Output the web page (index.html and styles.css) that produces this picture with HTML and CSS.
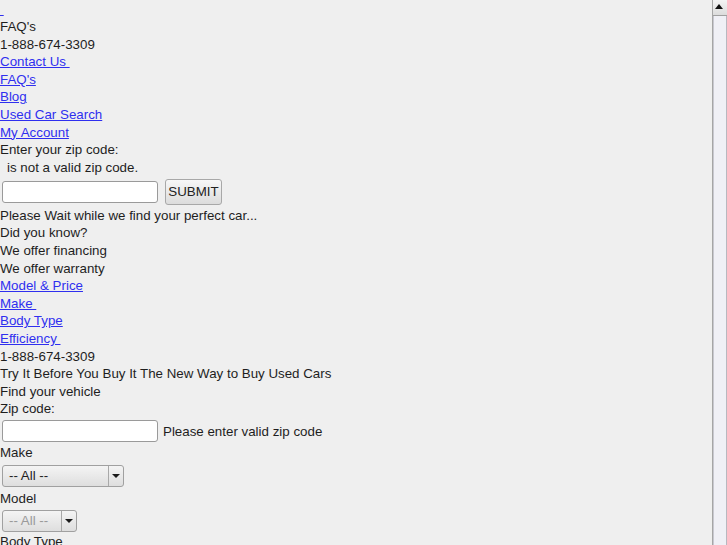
FILE: index.html
```html
<!DOCTYPE html>
<html>
<head>
<meta charset="utf-8">
<title>Used Cars</title>
<link rel="stylesheet" href="styles.css">
</head>
<body>
<div class="page">
  <div class="line"><a href="#" class="lnk">&nbsp;</a></div>
  <div class="line">FAQ's</div>
  <div class="line">1-888-674-3309</div>
  <div class="line"><a href="#" class="lnk">Contact Us </a></div>
  <div class="line"><a href="#" class="lnk">FAQ's</a></div>
  <div class="line"><a href="#" class="lnk">Blog</a></div>
  <div class="line"><a href="#" class="lnk">Used Car Search</a></div>
  <div class="line"><a href="#" class="lnk">My Account</a></div>
  <div class="line">Enter your zip code:</div>
  <div class="line indent">is not a valid zip code.</div>
  <div class="row row-submit">
    <span class="field"></span>
    <span class="btn">SUBMIT</span>
  </div>
  <div class="line">Please Wait while we find your perfect car...</div>
  <div class="line">Did you know?</div>
  <div class="line">We offer financing</div>
  <div class="line">We offer warranty</div>
  <div class="line"><a href="#" class="lnk">Model &amp; Price</a></div>
  <div class="line"><a href="#" class="lnk">Make </a></div>
  <div class="line"><a href="#" class="lnk">Body Type</a></div>
  <div class="line"><a href="#" class="lnk">Efficiency </a></div>
  <div class="line">1-888-674-3309</div>
  <div class="line">Try It Before You Buy It The New Way to Buy Used Cars</div>
  <div class="line">Find your vehicle</div>
  <div class="line">Zip code:</div>
  <div class="row row-zip">
    <span class="field"></span>
    <span class="hint">Please enter valid zip code</span>
  </div>
  <div class="line">Make</div>
  <div class="row row-select">
    <span class="select select-make"><span class="sel-text">-- All --</span><span class="sel-arrow"></span></span>
  </div>
  <div class="line">Model</div>
  <div class="row row-select2">
    <span class="select select-model disabled"><span class="sel-text">-- All --</span><span class="sel-arrow"></span></span>
  </div>
  <div class="line">Body Type</div>
  <div class="line">&nbsp;</div>
</div>
<div class="scrollbar">
  <div class="sb-up"><span class="sb-tri"></span></div>
  <div class="sb-track"></div>
</div>
</body>
</html>
```
FILE: styles.css
```css
* {
  box-sizing: border-box;
}
html {
  overflow: hidden;
  background: #efefef;
}
body {
  margin: 0;
  font-family: "Liberation Sans", Arial, sans-serif;
  font-size: 13.33px;
  line-height: 17.6px;
  color: #1e1e1e;
  background: #efefef;
}
.page {
  display: flex;
  flex-direction: column;
  align-items: flex-start;
  padding-top: 0.5px;
}
.line {
  height: 17.6px;
  white-space: pre;
}
.indent {
  padding-left: 7px;
}
.lnk {
  color: #2f2fef;
  text-decoration: underline;
  white-space: pre;
}
.row {
  display: flex;
  align-items: center;
}
.row-submit {
  height: 30.4px;
}
.row-zip {
  height: 26.4px;
  padding-top: 0.6px;
}
.field {
  display: block;
  width: 156px;
  height: 22px;
  margin-left: 2px;
  border: 1px solid #9a9a9a;
  border-radius: 3px;
  background: #ffffff;
}
.btn {
  display: block;
  margin-left: 7px;
  width: 57px;
  height: 26px;
  line-height: 24px;
  text-align: center;
  border: 1px solid #a8a8a8;
  border-radius: 3px;
  background: linear-gradient(#f7f7f7, #dcdcdc);
  color: #222;
}
.hint {
  margin-left: 5px;
}
.row-select {
  height: 27.6px;
  padding-top: 1px;
}
.row-select2 {
  height: 25.6px;
  padding-top: 2px;
}
.select {
  display: flex;
  margin-left: 2px;
  height: 22px;
  border: 1px solid #a0a0a0;
  border-radius: 3px;
  background: linear-gradient(#f4f4f4, #dedede);
}
.select-make { width: 122px; }
.select-model { width: 75px; }
.sel-text {
  flex: 1;
  padding-left: 6px;
  line-height: 20px;
  color: #1e1e1e;
}
.disabled .sel-text {
  color: #9a9a9a;
}
.sel-arrow {
  width: 15px;
  border-left: 1px solid #a8a8a8;
  position: relative;
}
.sel-arrow::after {
  content: "";
  position: absolute;
  left: 3px;
  top: 8px;
  border-left: 4px solid transparent;
  border-right: 4px solid transparent;
  border-top: 4px solid #1a1a1a;
}
.scrollbar {
  position: fixed;
  right: 0;
  top: 0;
  bottom: 0;
  width: 15px;
  display: flex;
  flex-direction: column;
  background: #e9e9ee;
  border-left: 1px solid #a6a6a6;
}
.sb-up {
  height: 16px;
  background: linear-gradient(#f4f4f4, #dcdcdc);
  border-bottom: 1px solid #a0a0a0;
  position: relative;
}
.sb-tri {
  position: absolute;
  left: 2px;
  top: 4px;
  border-left: 4px solid transparent;
  border-right: 4px solid transparent;
  border-bottom: 5px solid #111;
}
.sb-track {
  flex: 1;
  background: #f0f0f6;
  border-left: 1px solid #c8c8d0;
  border-right: 1px solid #b8b8c0;
}
```
